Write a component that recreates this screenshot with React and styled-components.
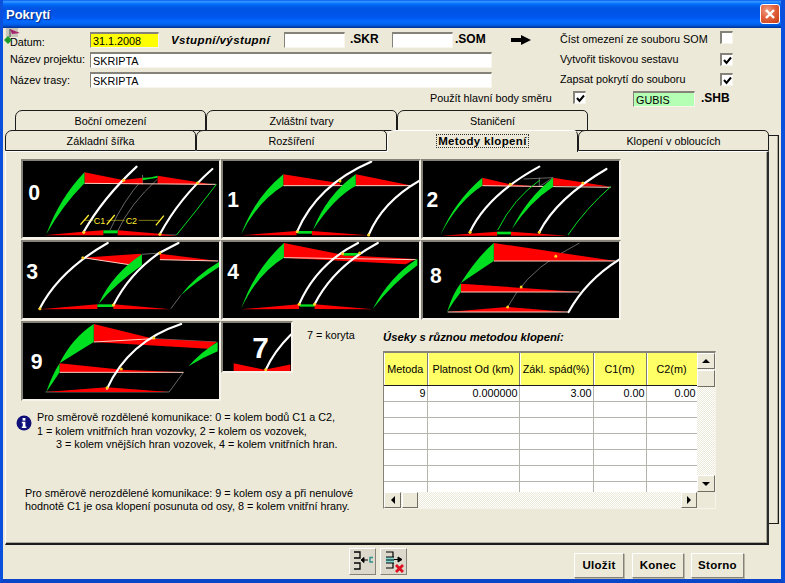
import React from "react";
import styled, { createGlobalStyle } from "styled-components";

const Global = createGlobalStyle`
  html, body { margin: 0; padding: 0; background: #ece9d8; }
  body { font-family: "Liberation Sans", Arial, sans-serif; font-size: 10.8px; color: #000; }
`;

const Window = styled.div`
  position: relative;
  width: 785px;
  height: 583px;
  box-sizing: border-box;
  overflow: hidden;
  background: #ece9d8;
  display: flex;
  flex-direction: column;
  border-left: 3px solid #0a50dc;
  border-right: 4px solid #0a50dc;
  border-bottom: 4px solid #0a46c8;
`;
const TitleBar = styled.div`
  height: 28px;
  flex: none;
  margin: 0 -4px 0 -3px;
  padding: 0 5px 0 6px;
  display: flex;
  align-items: center;
  justify-content: space-between;
  background: linear-gradient(180deg,#0058ee 0%,#3593ff 5%,#288eff 8%,#127dff 11%,#036ffc 14%,#0262ee 20%,#0057e5 28%,#0054e3 34%,#0055eb 56%,#005bf5 66%,#026afe 76%,#0062ef 86%,#0052d6 92%,#0040ab 96%,#003092 100%);
`;
const Title = styled.span`
  font: bold 13px "Liberation Sans", sans-serif;
  color: #fff;
  text-shadow: 1px 1px 1px #0a2a80;
`;
const CloseBtn = styled.div`
  width: 20px;
  height: 20px;
  box-sizing: border-box;
  border: 1px solid #fff;
  border-radius: 3px;
  background: radial-gradient(circle at 35% 30%, #f0a08a 0%, #e2623c 45%, #c33a16 100%);
  display: flex;
  align-items: center;
  justify-content: center;
`;
const AppIcon = styled.svg`
  position: absolute;
  left: 0;
  top: 27px;
  width: 20px;
  height: 20px;
`;

const Form = styled.div`
  padding: 3px 0 0 7px;
  height: 82px;
  box-sizing: border-box;
  flex: none;
`;
const Upper = styled.div`
  display: flex;
  margin-bottom: -1px;
`;
const LeftCol = styled.div`
  width: 550px;
`;
const RightCol = styled.div`
  width: 180px;
`;
const Row = styled.div`
  display: flex;
  align-items: flex-start;
  height: 20px;
`;
const Label = styled.span`
  width: ${p => p.$w}px;
  flex: none;
  white-space: nowrap;
  line-height: 14px;
  padding-top: ${p => p.$pt ?? 1}px;
  margin-left: ${p => p.$ml ?? 0}px;
`;
const Field = styled.div`
  width: ${p => p.$w}px;
  height: 16px;
  flex: none;
  box-sizing: border-box;
  margin-top: 1px;
  padding: 0 2px;
  line-height: 14px;
  white-space: nowrap;
  background: ${p => p.$bg ?? "#fff"};
  border: 1px solid;
  border-width: 2px 1px 1px 1px;
  border-color: #85827a #f7f5ec #f7f5ec #85827a;
`;
const Spacer = styled.span`
  width: ${p => p.$w}px;
  flex: none;
`;
const Emph = styled.span`
  width: ${p => p.$w}px;
  flex: none;
  margin-left: ${p => p.$ml ?? 0}px;
  padding-top: 2px;
  font: italic bold 11.5px/14px "Liberation Sans", sans-serif;
  letter-spacing: 0.4px;
  white-space: nowrap;
`;
const Suffix = styled.span`
  width: ${p => p.$w}px;
  flex: none;
  margin-left: ${p => p.$ml}px;
  padding-top: 1px;
  font: bold 12px/14px "Liberation Sans", sans-serif;
`;
const CheckBox = styled.div`
  width: 13px;
  height: 13px;
  flex: none;
  box-sizing: border-box;
  margin-top: ${p => p.$mt ?? 0}px;
  background: #fff;
  border: 1px solid;
  border-width: 2px 1px 1px 2px;
  border-color: #85827a #f7f5ec #f7f5ec #85827a;
  display: flex;
  align-items: center;
  justify-content: center;
`;
const ArrowIcon = styled.svg`
  flex: none;
  margin-top: 3px;
`;

const TabArea = styled.div`
  display: flex;
  align-items: flex-start;
  padding-left: 2px;
  flex: none;
`;
const TabColumn = styled.div`
  width: 764px;
  flex: none;
`;
const BackEdge = styled.div`
  width: 10px;
  height: 389px;
  flex: none;
  margin-top: 25px;
  box-sizing: border-box;
  border: solid #1a1a1a;
  border-width: 1px 1px 1px 0;
  box-shadow: inset -1px 0 0 #aca899;
`;
const TabRow = styled.div`
  display: flex;
  position: relative;
  padding-left: ${p => p.$pl}px;
  height: ${p => p.$h}px;
  z-index: ${p => p.$z};
`;
const Tab = styled.div`
  width: ${p => p.$w}px;
  height: ${p => p.$active ? 22 : p.$h}px;
  box-sizing: border-box;
  flex: none;
  text-align: center;
  line-height: ${p => p.$h - 2}px;
  padding-top: 1px;
  background: #ece9d8;
  border-radius: 7px 5px 0 0;
  border: 1px solid ${p => p.$active ? "#fff" : "#1c1c1c"};
  border-right-color: #1c1c1c;
  border-bottom: ${p => p.$active ? "none" : "1px solid #1c1c1c"};
  position: relative;
  z-index: ${p => p.$active ? 2 : 1};
  ${p => p.$active && "font-weight: bold;"}
`;
const Focus = styled.span`
  border: 1px dotted #333;
  padding: 0 1px;
  font-size: 11.5px;
  letter-spacing: 0.35px;
`;
const Panel = styled.div`
  height: 394px;
  box-sizing: border-box;
  position: relative;
  border: 1px solid #fff;
  border-right: 2px solid #2a2a2a;
  border-bottom: 2px solid #1c1c1c;
  box-shadow: inset -1px 0 0 #aca899, inset 0 -1px 0 #aca899;
  padding: 7px 0 0 15px;
`;
const Thumbs = styled.div`
  display: grid;
  grid-template-columns: repeat(3, 200px);
  row-gap: 1px;
`;
const ThumbFrame = styled.div`
  width: ${p => p.$w ?? 200}px;
  height: ${p => p.$h ?? 80}px;
  flex: none;
  box-sizing: border-box;
  background: #000;
  border: 2px solid;
  border-color: #85827a #f5f3ea #f5f3ea #85827a;
  overflow: hidden;
  & > svg { display: block; width: 100%; height: 100%; }
`;
const Lower = styled.div`
  display: flex;
  margin-top: 1px;
`;
const LowerLeft = styled.div`
  width: 362px;
  flex: none;
`;
const LowerThumbs = styled.div`
  display: flex;
  align-items: flex-start;
`;
const Koryta = styled.span`
  margin: 7px 0 0 14px;
  white-space: nowrap;
  line-height: 14px;
`;
const NoteTop = styled.div`
  display: flex;
  gap: 5px;
  margin: 10px 0 0 -5px;
  line-height: 13.5px;
  white-space: nowrap;
`;
const NoteBottom = styled.div`
  margin: 35px 0 0 4px;
  line-height: 13.5px;
  white-space: nowrap;
`;
const Indent = styled.div`
  padding-left: 19px;
`;
const InfoIcon = styled.svg`
  width: 16px;
  height: 16px;
  flex: none;
  margin-top: 4px;
`;
const LowerRight = styled.div`
  padding-top: 9px;
`;
const TableTitle = styled.div`
  font: italic bold 11.3px/14px "Liberation Sans", sans-serif;
  white-space: nowrap;
  margin-bottom: 7px;
`;
const TableBox = styled.div`
  width: 333px;
  height: 158px;
  box-sizing: border-box;
  border: 1px solid;
  border-width: 2px 1px 1px 1px;
  border-color: #85827a #f5f3ea #f5f3ea #85827a;
  display: grid;
  grid-template-columns: 313px 18px;
  grid-template-rows: 139px 16px;
`;
const ViewPort = styled.div`
  overflow: hidden;
  background: #fff;
`;
const Table = styled.table`
  border-collapse: collapse;
  table-layout: fixed;
  width: 313px;
`;
const Th = styled.th`
  width: ${p => p.$w}px;
  height: 32px;
  box-sizing: border-box;
  padding: 0;
  font-weight: normal;
  font-size: 10.8px;
  background: #ffff66;
  white-space: nowrap;
  border-right: 1px solid #7c7a70;
  border-bottom: 1px solid #1c1c1c;
  box-shadow: inset 1px 0 0 #fff;
`;
const Td = styled.td`
  height: 16px;
  box-sizing: border-box;
  padding: 0 1px 0 0;
  text-align: right;
  line-height: 14px;
  font-size: 10.8px;
  border-right: 1px solid #b5b5ae;
  border-bottom: 1px solid #b5b5ae;
`;
const Track = styled.div`
  display: flex;
  flex-direction: ${p => p.$dir};
  justify-content: space-between;
  background-color: #fff;
  background-image: conic-gradient(#ece9d8 25%, #fff 0 50%, #ece9d8 0 75%, #fff 0);
  background-size: 2px 2px;
`;
const TrackGroup = styled.div`
  display: flex;
  flex-direction: ${p => p.$dir};
  gap: 1px;
`;
const ScrollBtn = styled.div`
  width: ${p => p.$w}px;
  height: ${p => p.$h}px;
  flex: none;
  box-sizing: border-box;
  background: #ece9d8;
  border: 1px solid;
  border-color: #fff #716f64 #716f64 #fff;
  display: flex;
  align-items: center;
  justify-content: center;
`;
const Corner = styled.div`
  background: #ece9d8;
`;

const Footer = styled.div`
  flex: 1;
  display: flex;
  align-items: flex-start;
  padding: 3px 0 0 346px;
`;
const IconBtn = styled.div`
  width: 27px;
  height: 27px;
  box-sizing: border-box;
  margin-right: ${p => p.$mr}px;
  background: #dcd9cc;
  border: 1px solid;
  border-color: #fff #85827a #85827a #fff;
  & > svg { display: block; }
`;
const Btn = styled.div`
  width: ${p => p.$w}px;
  height: 25px;
  margin: 5px ${p => p.$mr}px 0 0;
  box-sizing: border-box;
  background: #ece9d8;
  border: 1px solid;
  border-color: #fff #85827a #85827a #fff;
  box-shadow: 1px 1px 0 #b9b6a8;
  font: bold 11.5px/23px "Liberation Sans", sans-serif;
  letter-spacing: 0.3px;
  text-align: center;
`;

const R = "#ff0000", G = "#00e020", W = "#ffffff", Y = "#ffd020";

const Scene = ({ s }) => (
  <svg viewBox={s.box} preserveAspectRatio="none">
    {(s.thin || []).map((d, i) => <path key={i} d={d} fill="none" stroke="#9a9a9a" strokeWidth="2" />)}
    {(s.red || []).map((d, i) => <path key={i} d={d} fill={R} />)}
    {(s.lines || []).map((d, i) => <path key={i} d={d} fill="none" stroke="#ffd0c0" strokeWidth="3" />)}
    {(s.green || []).map((d, i) => <path key={i} d={d} fill={G} />)}
    {(s.gline || []).map((d, i) => <path key={i} d={d} fill="none" stroke={G} strokeWidth="3" />)}
    {(s.white || []).map((d, i) => <path key={i} d={d} fill="none" stroke={W} strokeWidth="6.5" strokeLinecap="round" />)}
    {(s.dots || []).map(([x, y], i) => <circle key={i} cx={x} cy={y} r="4.5" fill={Y} />)}
    {s.extra}
    <text x={s.digit[1]} y={s.digit[2]} fill="#fff" fontFamily="Liberation Sans, sans-serif" fontWeight="bold" fontSize={s.digit[3] || 64}>{s.digit[0]}</text>
  </svg>
);

const Dim = () => (
  <g stroke="#ffee30" strokeWidth="4" fill="#ffee30">
    <path d="M193 209 L218 180 M272 209 L296 180 M420 211 L444 182" />
    <path d="M205 196 L232 196 M272 196 L326 196 M368 196 L430 196" strokeWidth="1.5" />
    <text x="233" y="207" fontSize="27" fontFamily="Liberation Sans, sans-serif" stroke="none">C1</text>
    <text x="329" y="207" fontSize="27" fontFamily="Liberation Sans, sans-serif" stroke="none">C2</text>
  </g>
);

const S0 = {
  box: "20 18 590 228", digit: ["0", 36, 136],
  thin: ["M282 225 Q320 140 380 72", "M305 228 Q340 150 425 72", "M380 60 L380 88", "M480 240 L435 240"],
  red: ["M85 241 L200 230 L262 226 L262 241Z", "M305 226 L430 236 L482 242 L305 241Z", "M205 52 L320 75 L380 68 L380 88 L205 85Z", "M425 62 L600 90 L425 86Z"],
  lines: ["M205 85 L600 88"],
  green: ["M205 52 L205 85 Q140 150 90 238 Q130 130 205 52Z", "M262 226 L305 226 L305 235 L262 235Z", "M380 68 Q400 70 425 62 L425 68 Q400 72 380 76Z"],
  gline: ["M602 88 Q540 170 482 240"],
  white: ["M202 232 Q260 130 362 35", "M432 238 Q490 130 590 42"],
  dots: [[203, 232], [432, 238], [323, 76], [545, 84]],
  extra: <Dim />,
};
const S3 = {
  box: "20 265 590 228", digit: ["3", 30, 375],
  thin: ["M465 465 L495 425", "M378 302 L432 298"],
  red: ["M200 312 L375 300 L375 322 L340 333Z", "M432 300 L608 322 L432 318Z", "M72 467 L244 452 L244 466Z", "M292 452 L465 467 L292 466Z"],
  lines: ["M200 312 L340 333", "M432 318 L608 322"],
  green: ["M378 302 L378 335 Q300 390 248 450 Q290 360 378 302Z", "M610 325 L610 340 Q540 385 495 425 Q540 365 610 325Z", "M244 452 L290 452 L290 460 L244 460Z"],
  white: ["M70 465 Q130 350 275 268", "M292 455 Q340 360 430 298 L488 268"],
  dots: [[71, 465], [292, 454], [200, 312], [432, 298]],
};
const S1 = {
  box: "5 18 595 228", digit: ["1", 18, 155],
  red: ["M188 58 L360 85 L360 92 L188 92Z", "M408 58 L580 92 L408 92Z", "M62 241 L228 228 L228 241Z", "M275 228 L445 241 L275 241Z"],
  lines: ["M188 92 L580 92"],
  green: ["M188 58 L188 92 Q110 140 60 238 Q100 130 188 58Z", "M408 58 L408 92 Q340 130 278 225 Q320 120 408 58Z", "M232 228 L275 228 L275 236 L232 236Z"],
  white: ["M230 230 Q290 90 455 20", "M447 240 Q490 140 600 78"],
  dots: [[230, 230], [447, 240], [360, 78]],
};
const S4 = {
  box: "5 265 595 228", digit: ["4", 18, 375],
  red: ["M190 268 L375 305 L590 316 L560 332 L190 312Z", "M60 467 L236 452 L236 466Z", "M283 452 L460 467 L283 466Z"],
  lines: ["M190 312 L590 318"],
  green: ["M190 268 L190 312 Q110 360 60 465 Q100 350 190 268Z", "M595 315 L595 335 Q520 390 460 465 Q510 370 595 315Z", "M238 452 L283 452 L283 459 L238 459Z", "M370 298 L420 298 L420 306 L370 306Z"],
  white: ["M236 452 Q290 330 415 268", "M283 452 Q340 340 475 268"],
  dots: [[236, 452], [283, 452], [368, 300], [420, 298]],
};
const S2 = {
  box: "5 18 595 228", digit: ["2", 16, 155],
  thin: ["M358 68 L358 95 L400 68", "M310 72 L400 68"],
  red: ["M185 68 L270 88 L360 95 L185 92Z", "M400 68 L575 95 L400 92Z", "M60 242 L230 230 L230 242Z", "M272 230 L445 242 L272 242Z"],
  lines: ["M185 92 L575 97"],
  green: ["M185 68 L185 92 Q110 140 58 240 Q100 140 185 68Z", "M400 68 L400 95 Q330 140 275 222 Q320 130 400 68Z", "M230 230 L272 230 L272 238 L230 238Z"],
  gline: ["M575 95 Q500 160 445 240", "M232 225 Q280 130 360 75"],
  white: ["M147 232 Q200 120 358 35", "M358 232 Q410 130 562 42"],
  dots: [[148, 232], [358, 232], [270, 88], [490, 84]],
};
const S8 = {
  box: "5 265 595 228", digit: ["8", 26, 388],
  thin: ["M262 460 Q310 370 408 308 L480 268"],
  red: ["M220 268 L590 322 L220 322Z", "M120 390 L480 415 L120 415Z", "M80 475 L260 460 L445 475Z"],
  lines: ["M220 322 L590 322", "M120 415 L480 415", "M80 475 L445 475"],
  green: ["M220 268 L220 322 L120 388 Q170 310 220 268Z", "M120 388 L120 415 Q100 440 78 475 Q95 420 120 388Z"],
  white: ["M447 475 Q500 380 600 318"],
  dots: [[408, 308], [303, 400], [262, 460]],
};
const S9 = {
  box: "22 15 590 228", digit: ["9", 45, 152],
  thin: ["M505 163 L462 222", "M90 222 L462 222", "M415 62 L605 72"],
  red: ["M235 18 L415 62 L605 72 L580 92 L235 72Z", "M132 136 L320 155 L505 163 L132 163Z", "M90 222 L275 208 L462 222Z"],
  lines: ["M235 72 L415 62", "M132 163 L505 163"],
  green: ["M235 18 L235 72 L132 136 Q170 60 235 18Z", "M132 136 L132 163 Q115 190 92 222 Q110 170 132 136Z", "M608 72 L608 100 Q560 120 520 145 Q560 100 608 72Z"],
  white: ["M275 212 Q340 70 498 18"],
  dots: [[275, 209], [318, 153], [416, 60]],
};
const S7 = {
  box: "622 12 210 150", digit: ["7", 712, 122, 92],
  red: ["M655 138 L750 158 L830 142 L830 162 L655 162Z"],
  white: ["M754 158 Q780 100 832 48"],
  dots: [[754, 158]],
};

const Check = () => (
  <svg width="9" height="9" viewBox="0 0 9 9"><path d="M1 4 L3.5 7 L8 1.5" fill="none" stroke="#000" strokeWidth="2" /></svg>
);
const Arrow = ({ d }) => (
  <svg width="8" height="8" viewBox="0 0 8 8"><path d={d} fill="#000" /></svg>
);

const columns = [
  ["Metoda", 43], ["Platnost Od (km)", 92], ["Zákl. spád(%)", 74], ["C1(m)", 53], ["C2(m)", 51],
];

const App = () => (
  <>
    <Global />
    <Window>
      <TitleBar>
        <Title>Pokrytí</Title>
        <CloseBtn>
          <svg width="12" height="12" viewBox="0 0 12 12"><path d="M2 2 L10 10 M10 2 L2 10" stroke="#fff" strokeWidth="2.4" /></svg>
        </CloseBtn>
      </TitleBar>
      <AppIcon viewBox="0 0 20 20">
        <rect x="3" y="1" width="12" height="9" fill="#c9c6ba" />
        <path d="M7 2 L17 6 L9 7Z" fill="#a8246c" />
        <path d="M7 2 L7 10" stroke="#444" />
        <path d="M5 9 L9 13 L5 17 L1 13Z" fill="#1f9a2c" />
      </AppIcon>
      <Form>
        <Upper>
          <LeftCol>
            <Row>
              <Label $w={80} $pt={4}>Datum:</Label>
              <Field $w={69} $bg="#ffff00">31.1.2008</Field>
              <Emph $w={113} $ml={12}>Vstupní/výstupní</Emph>
              <Field $w={61} />
              <Suffix $w={42} $ml={5}>.SKR</Suffix>
              <Field $w={61} />
              <Suffix $w={55} $ml={2}>.SOM</Suffix>
              <ArrowIcon width="22" height="12" viewBox="0 0 22 12">
                <path d="M1 4 L11 4 L11 1 L21 6 L11 11 L11 8 L1 8Z" fill="#000" />
              </ArrowIcon>
            </Row>
            <Row>
              <Label $w={80}>Název projektu:</Label>
              <Field $w={402}>SKRIPTA</Field>
            </Row>
            <Row>
              <Label $w={80} $pt={2}>Název trasy:</Label>
              <Field $w={402}>SKRIPTA</Field>
            </Row>
          </LeftCol>
          <RightCol>
            <Row>
              <Label $w={160}>Číst omezení ze souboru SOM</Label>
              <CheckBox />
            </Row>
            <Row>
              <Label $w={160}>Vytvořit tiskovou sestavu</Label>
              <CheckBox $mt={2}><Check /></CheckBox>
            </Row>
            <Row>
              <Label $w={160}>Zapsat pokrytí do souboru</Label>
              <CheckBox $mt={2}><Check /></CheckBox>
            </Row>
          </RightCol>
        </Upper>
        <Row>
          <Label $w={143} $ml={420} $pt={1}>Použít hlavní body směru</Label>
          <CheckBox $mt={1}><Check /></CheckBox>
          <Spacer $w={47} />
          <Field $w={62} $bg="#b4ffb4">GUBIS</Field>
          <Suffix $w={40} $ml={6}>.SHB</Suffix>
        </Row>
      </Form>
      <TabArea>
        <TabColumn>
          <TabRow $pl={10} $h={20} $z={1}>
            <Tab $w={191} $h={21}>Boční omezení</Tab>
            <Tab $w={191} $h={21}>Zvláštní tvary</Tab>
            <Tab $w={191} $h={21}>Staničení</Tab>
          </TabRow>
          <TabRow $pl={0} $h={21} $z={2}>
            <Tab $w={191} $h={21}>Základní šířka</Tab>
            <Tab $w={191} $h={21}>Rozšíření</Tab>
            <Tab $w={191} $h={21} $active><Focus>Metody klopení</Focus></Tab>
            <Tab $w={191} $h={21}>Klopení v obloucích</Tab>
          </TabRow>
          <Panel>
            <Thumbs>
              {[S0, S1, S2, S3, S4, S8].map((s, i) => (
                <ThumbFrame key={i}><Scene s={s} /></ThumbFrame>
              ))}
            </Thumbs>
            <Lower>
              <LowerLeft>
                <LowerThumbs>
                  <ThumbFrame><Scene s={S9} /></ThumbFrame>
                  <ThumbFrame $w={72} $h={52}><Scene s={S7} /></ThumbFrame>
                  <Koryta>7 = koryta</Koryta>
                </LowerThumbs>
                <NoteTop>
                  <InfoIcon viewBox="0 0 16 16">
                    <circle cx="8" cy="8" r="7.5" fill="#10107a" />
                    <rect x="6.6" y="3" width="2.8" height="2.6" fill="#fff" />
                    <path d="M5.8 6.8 H9.4 V11.6 H10.4 V13 H5.8 V11.6 H6.8 V8.2 H5.8Z" fill="#fff" />
                  </InfoIcon>
                  <div>
                    <div>Pro směrově rozdělené komunikace: 0 = kolem bodů C1 a  C2,</div>
                    <div>1 = kolem vnitřních hran vozovky, 2 = kolem os vozovek,</div>
                    <Indent>3 = kolem vnějších hran vozovek, 4 = kolem vnitřních hran.</Indent>
                  </div>
                </NoteTop>
                <NoteBottom>
                  <div>Pro směrově nerozdělené komunikace: 9 = kolem osy a při nenulové</div>
                  <div>hodnotě C1 je osa klopení posunuta od osy, 8 = kolem vnitřní hrany.</div>
                </NoteBottom>
              </LowerLeft>
              <LowerRight>
                <TableTitle>Úseky s různou metodou klopení:</TableTitle>
                <TableBox>
                  <ViewPort>
                    <Table>
                      <thead>
                        <tr>{columns.map(([n, w]) => <Th key={n} $w={w}>{n}</Th>)}</tr>
                      </thead>
                      <tbody>
                        <tr><Td>9</Td><Td>0.000000</Td><Td>3.00</Td><Td>0.00</Td><Td>0.00</Td></tr>
                        {[0, 1, 2, 3, 4, 5].map(i => (
                          <tr key={i}><Td /><Td /><Td /><Td /><Td /></tr>
                        ))}
                      </tbody>
                    </Table>
                  </ViewPort>
                  <Track $dir="column">
                    <TrackGroup $dir="column">
                      <ScrollBtn $w={18} $h={16}><Arrow d="M0 6 L4 2 L8 6Z" /></ScrollBtn>
                      <ScrollBtn $w={18} $h={17} />
                    </TrackGroup>
                    <ScrollBtn $w={18} $h={17}><Arrow d="M0 2 L4 6 L8 2Z" /></ScrollBtn>
                  </Track>
                  <Track $dir="row">
                    <TrackGroup $dir="row">
                      <ScrollBtn $w={17} $h={16}><Arrow d="M6 0 L2 4 L6 8Z" /></ScrollBtn>
                      <ScrollBtn $w={16} $h={16} />
                    </TrackGroup>
                    <ScrollBtn $w={16} $h={16}><Arrow d="M2 0 L6 4 L2 8Z" /></ScrollBtn>
                  </Track>
                  <Corner />
                </TableBox>
              </LowerRight>
            </Lower>
          </Panel>
        </TabColumn>
        <BackEdge />
      </TabArea>
      <Footer>
        <IconBtn $mr={4}>
          <svg width="25" height="25" viewBox="0 0 25 25">
            <path d="M4 3 H10 V9 H4 M4 14 H10 V20 H4" fill="none" stroke="#000" strokeWidth="1.3" />
            <path d="M11 11 L14 8.5 V13.5Z M14 11 H18" stroke="#000" fill="#000" />
            <path d="M23 8.5 H20 V13 H23" fill="none" stroke="#2f8f8a" strokeWidth="1.4" />
          </svg>
        </IconBtn>
        <IconBtn $mr={167}>
          <svg width="25" height="25" viewBox="0 0 25 25">
            <rect x="5" y="8" width="8" height="6" fill="#7fd8d0" />
            <path d="M5 3 H12 V8 M5 8 H13 M5 11 H13 M5 14 H13 M5 19 H12 V14" fill="none" stroke="#000" strokeWidth="1.2" />
            <path d="M13 10.5 H18 M17 8 L21 10.5 L17 13Z" stroke="#000" fill="#000" />
            <path d="M15 16 L22 23 M22 16 L15 23" stroke="#e01020" strokeWidth="2.8" />
          </svg>
        </IconBtn>
        <Btn $w={50} $mr={8}>Uložit</Btn>
        <Btn $w={52} $mr={7}>Konec</Btn>
        <Btn $w={53} $mr={0}>Storno</Btn>
      </Footer>
    </Window>
  </>
);

export default App;
